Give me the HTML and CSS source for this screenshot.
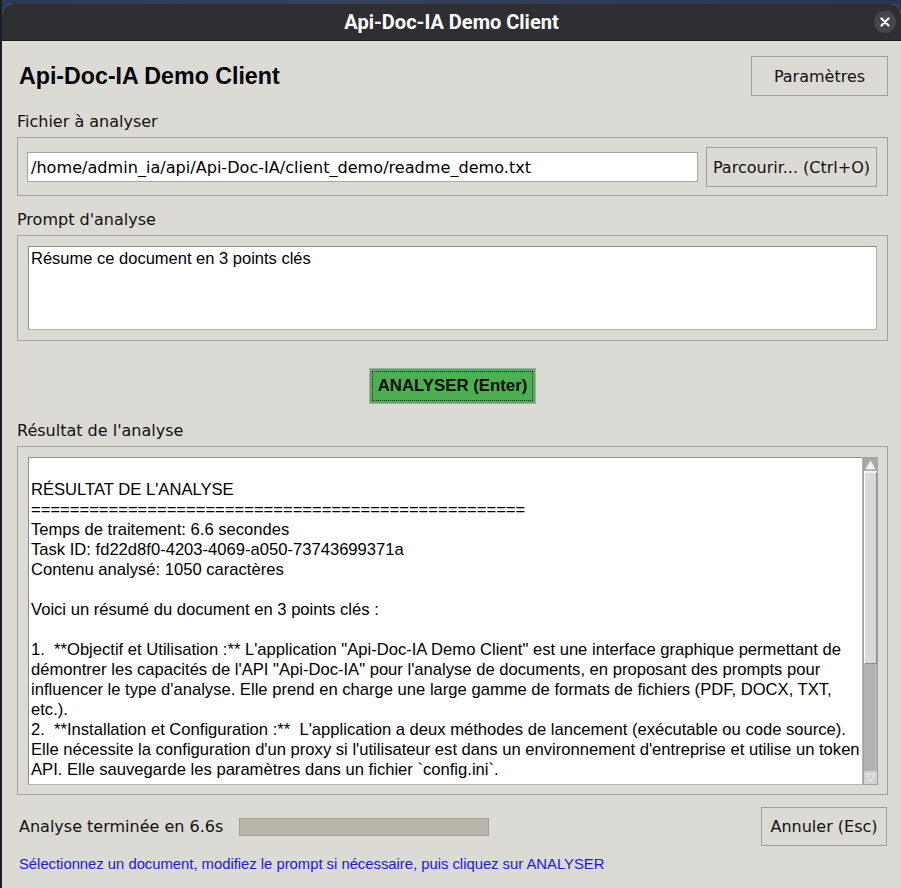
FILE: index.html
```html
<!DOCTYPE html>
<html lang="fr">
<head>
<meta charset="utf-8">
<title>Api-Doc-IA Demo Client</title>
<link rel="stylesheet" href="styles.css">
</head>
<body>
<div class="window">
  <div class="titlebar">
    <span></span>
    <span class="wtitle">Api-Doc-IA Demo Client</span>
    <span class="close"><svg width="10" height="10" viewBox="0 0 10 10"><path d="M1.5 1.5 L8.5 8.5 M8.5 1.5 L1.5 8.5" stroke="#ffffff" stroke-width="2.2" stroke-linecap="round"/></svg></span>
  </div>
  <div class="content">
    <div class="header">
      <h1 class="apptitle">Api-Doc-IA Demo Client</h1>
      <button class="btn btn-params">Paramètres</button>
    </div>

    <div class="label label-first">Fichier à analyser</div>
    <div class="frame frame-file">
      <input class="entry" value="/home/admin_ia/api/Api-Doc-IA/client_demo/readme_demo.txt">
      <button class="btn btn-browse">Parcourir... (Ctrl+O)</button>
    </div>

    <div class="label">Prompt d'analyse</div>
    <div class="frame frame-prompt">
      <textarea class="prompt">Résume ce document en 3 points clés</textarea>
    </div>

    <div class="actions">
      <button class="btn-analyze"><span class="focus">ANALYSER (Enter)</span></button>
    </div>

    <div class="label label-result">Résultat de l'analyse</div>
    <div class="frame frame-result">
      <div class="result">
<div class="line"> </div><div class="line">RÉSULTAT DE L'ANALYSE</div><div class="line">===================================================</div><div class="line">Temps de traitement: 6.6 secondes</div><div class="line">Task ID: fd22d8f0-4203-4069-a050-73743699371a</div><div class="line">Contenu analysé: 1050 caractères</div><div class="line"> </div><div class="line">Voici un résumé du document en 3 points clés :</div><div class="line"> </div><div class="line">1.  **Objectif et Utilisation :** L'application "Api-Doc-IA Demo Client" est une interface graphique permettant de</div><div class="line">démontrer les capacités de l'API "Api-Doc-IA" pour l'analyse de documents, en proposant des prompts pour</div><div class="line">influencer le type d'analyse. Elle prend en charge une large gamme de formats de fichiers (PDF, DOCX, TXT,</div><div class="line">etc.).</div><div class="line">2.  **Installation et Configuration :**  L'application a deux méthodes de lancement (exécutable ou code source).</div><div class="line">Elle nécessite la configuration d'un proxy si l'utilisateur est dans un environnement d'entreprise et utilise un token</div><div class="line">API. Elle sauvegarde les paramètres dans un fichier `config.ini`.</div><div class="line"> </div>
      </div>
      <div class="scrollbar">
        <div class="sb-arrow sb-up"><svg width="11" height="10" viewBox="0 0 11 10"><path d="M5.5 1 L10 9 L1 9 Z" fill="#f4f4f4" stroke="#e8e8e8" stroke-width="0.8"/></svg></div>
        <div class="sb-slider"></div>
        <div class="sb-trough"></div>
        <div class="sb-arrow sb-down"><svg width="11" height="10" viewBox="0 0 11 10"><path d="M1 1 L10 1 L5.5 9 Z" fill="none" stroke="#f2f2f2" stroke-width="1"/></svg></div>
      </div>
    </div>

    <div class="status">
      <span class="status-text">Analyse terminée en 6.6s</span>
      <div class="progress"></div>
      <button class="btn btn-cancel">Annuler (Esc)</button>
    </div>

    <div class="hint">Sélectionnez un document, modifiez le prompt si nécessaire, puis cliquez sur ANALYSER</div>
  </div>
</div>
</body>
</html>
```
FILE: styles.css
```css
html, body {
  margin: 0;
  padding: 0;
}
body {
  width: 901px;
  height: 888px;
  overflow: hidden;
  background: linear-gradient(90deg, #1b1d24 0px, #1b1d24 2px, #2c3a57 2px, #34415c 40%, #2a3450 100%);
}
.window {
  margin: 4px 0 0 2px;
  width: 899px;
  height: 884px;
  background: #dcdad5;
  border-radius: 10px 10px 0 0;
  overflow: hidden;
}
.titlebar {
  height: 36px;
  background: #2f2e33;
  border-bottom: 1px solid #1b1b1d;
  display: grid;
  grid-template-columns: 1fr auto 1fr;
  align-items: center;
}
.wtitle {
  font-family: Roboto, "Liberation Sans", sans-serif;
  font-weight: 700;
  font-size: 20px;
  color: #ffffff;
}
.close {
  justify-self: end;
  margin-right: 5px;
  width: 22px;
  height: 22px;
  border-radius: 50%;
  background: #47464b;
  display: flex;
  align-items: center;
  justify-content: center;
}
.content {
  padding: 15px 13px 0 15px;
}
.header {
  display: flex;
  justify-content: space-between;
  align-items: center;
  height: 40px;
}
.apptitle {
  margin: 0;
  padding-left: 2px;
  font-family: "Liberation Sans", Arial, sans-serif;
  font-weight: 700;
  font-size: 23.2px;
  color: #000;
}
.btn {
  box-sizing: border-box;
  height: 40px;
  padding: 0;
  margin: 0;
  border: 1px solid #a09e99;
  border-radius: 0;
  background: #dcdad5;
  font-family: "DejaVu Sans", sans-serif;
  font-size: 16px;
  color: #111;
}
.btn-params { width: 137px; }
.btn-browse { width: 171px; flex: none; }
.btn-cancel { width: 126px; height: 39px; margin-left: auto; }

.label {
  font-family: "DejaVu Sans", sans-serif;
  font-size: 16px;
  line-height: 20px;
  color: #111;
  margin: 14px 0 5px 0;
}
.label-first { margin-top: 16px; }
.label-result { margin-top: 17px; }

.frame {
  border: 1px solid #a3a19c;
}
.frame-file {
  display: flex;
  align-items: center;
  gap: 8px;
  padding: 9px 10px 8px 9px;
}
.entry {
  flex: 1;
  min-width: 0;
  box-sizing: border-box;
  height: 30px;
  margin: 0;
  border: 1px solid #a5a5a5;
  padding: 0 3px;
  background: #ffffff;
  font-family: "DejaVu Sans", sans-serif;
  font-size: 16.1px;
  color: #000;
  outline: none;
}
.frame-prompt {
  padding: 10px;
}
.prompt {
  display: block;
  box-sizing: border-box;
  width: 100%;
  height: 84px;
  margin: 0;
  border: 1px solid #b4b4b4;
  border-top-color: #8c8c8c;
  border-left-color: #8c8c8c;
  padding: 1px 2px;
  resize: none;
  background: #fff;
  font-family: "Liberation Sans", Arial, sans-serif;
  font-size: 16.5px;
  line-height: 20px;
  color: #000;
  outline: none;
}
.actions {
  display: flex;
  justify-content: center;
  margin-top: 27px;
}
.btn-analyze {
  box-sizing: border-box;
  width: 167px;
  height: 36px;
  padding: 2px;
  margin: 0;
  border: 1px solid #9fae9f;
  border-radius: 0;
  background: #4caf50;
  display: flex;
}
.focus {
  flex: 1;
  display: flex;
  align-items: center;
  justify-content: center;
  border: 1px dotted #1a1a1a;
  font-family: "Liberation Sans", Arial, sans-serif;
  font-weight: 700;
  font-size: 16.8px;
  color: #0c0c0c;
}
.frame-result {
  display: flex;
  padding: 10px 9px 9px 10px;
}
.result {
  flex: 1;
  min-width: 0;
  box-sizing: border-box;
  height: 328px;
  border: 1px solid #b4b4b4;
  border-top-color: #8c8c8c;
  border-left-color: #8c8c8c;
  padding: 2px 2px 0 2px;
  background: #fff;
  overflow: hidden;
  font-family: "Liberation Sans", Arial, sans-serif;
  font-size: 16.6px;
  line-height: 20px;
  color: #000;
}
.line {
  white-space: pre;
  height: 20px;
}
.scrollbar {
  box-sizing: border-box;
  width: 15px;
  height: 328px;
  border: 1px solid #a2a2a2;
  background: #b3b3b3;
  display: flex;
  flex-direction: column;
}
.sb-arrow {
  height: 13px;
  display: flex;
  align-items: center;
  justify-content: center;
  flex: none;
}
.sb-up {
  background: #a9a9a9;
  border-bottom: 1px solid #ffffff;
}
.sb-down {
  background: #d0d0d0;
}
.sb-slider {
  height: 190px;
  flex: none;
  background: #d9d9d9;
  border-left: 1px solid #ffffff;
  border-top: 1px solid #f5f5f5;
  border-right: 1px solid #8d8d8d;
  border-bottom: 1px solid #8d8d8d;
}
.sb-trough {
  flex: 1;
  background: #b3b3b3;
}
.status {
  display: flex;
  align-items: center;
  height: 39px;
  margin-top: 12px;
  padding: 0 1px 0 2px;
}
.status-text {
  font-family: "DejaVu Sans", sans-serif;
  font-size: 16px;
  color: #111;
}
.progress {
  box-sizing: border-box;
  width: 250px;
  height: 18px;
  margin-left: 16px;
  background: #b9b5ab;
  border: 1px solid #a29e95;
}
.hint {
  margin-top: 9px;
  padding-left: 2px;
  font-family: "Liberation Sans", Arial, sans-serif;
  font-size: 14.8px;
  line-height: 18px;
  color: #1616f8;
}
```
